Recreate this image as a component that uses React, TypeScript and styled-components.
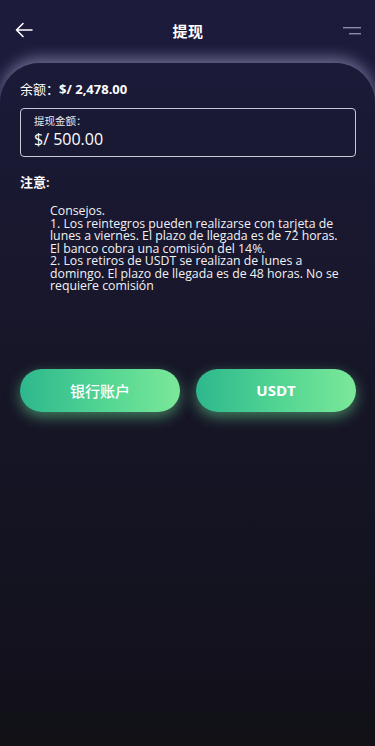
import React from "react";
import styled, { createGlobalStyle } from "styled-components";

const GlobalStyle = createGlobalStyle`
  html, body {
    margin: 0;
    padding: 0;
    background: #111116;
  }
  body {
    font-family: "Open Sans", "Noto Sans CJK SC", sans-serif;
    color: #ffffff;
  }
`;

const Page = styled.div`
  width: 375px;
  min-height: 746px;
  display: flex;
  flex-direction: column;
  background: #1c1b3b;
  overflow: hidden;
`;

const Header = styled.div`
  height: 63px;
  display: flex;
  align-items: center;
  justify-content: space-between;
  padding: 0 11px 3px 12px;
  box-sizing: border-box;
`;

const Title = styled.div`
  font-size: 15px;
  font-weight: 700;
  letter-spacing: 0.5px;
`;

const IconBtn = styled.div`
  width: 24px;
  height: 24px;
  display: flex;
  align-items: center;
  justify-content: center;
`;

const Card = styled.div`
  flex: 1;
  display: flex;
  flex-direction: column;
  border-radius: 40px 40px 0 0;
  background: linear-gradient(180deg, #1b1a38 0%, #171628 45%, #12111c 90%, #111116 100%);
  box-shadow: 0 -6px 14px rgba(190, 190, 235, 0.45);
  padding: 15px 19px 0 20px;
`;

const Balance = styled.div`
  font-size: 13px;
  line-height: 18px;
  margin-top: 2px;
`;

const Strong = styled.span`
  font-weight: 700;
`;

const AmountBox = styled.div`
  margin-top: 10px;
  border: 1px solid #c9c9d6;
  border-radius: 4px;
  padding: 5px 13px 6px;
  display: flex;
  flex-direction: column;
`;

const AmountLabel = styled.div`
  font-size: 10.5px;
  line-height: 14px;
  color: #e8e8ef;
`;

const AmountValue = styled.div`
  font-size: 16px;
  line-height: 22px;
`;

const NoteTitle = styled.div`
  margin-top: 16px;
  font-size: 13px;
  font-weight: 600;
  line-height: 18px;
`;

const NoteText = styled.div`
  margin: 14px 0 0 30px;
  font-size: 12.3px;
  line-height: 12.5px;
  color: #f2f2f5;
`;

const Buttons = styled.div`
  margin-top: 76px;
  display: grid;
  grid-template-columns: 1fr 1fr;
  gap: 16px;
`;

const GreenButton = styled.button<{ $cjk?: boolean }>`
  height: 43px;
  border: none;
  border-radius: 22px;
  background: linear-gradient(90deg, #2db88d 0%, #55d693 55%, #7be899 100%);
  box-shadow: 0 5px 14px rgba(110, 230, 150, 0.5);
  color: #ffffff;
  font-family: "Open Sans", "Noto Sans CJK SC", sans-serif;
  font-size: 15px;
  font-weight: ${(p) => (p.$cjk ? 500 : 700)};
  padding: 0;
`;

const lines = [
  "Consejos.",
  "1. Los reintegros pueden realizarse con tarjeta de",
  "lunes a viernes. El plazo de llegada es de 72 horas.",
  "El banco cobra una comisión del 14%.",
  "2. Los retiros de USDT se realizan de lunes a",
  "domingo. El plazo de llegada es de 48 horas. No se",
  "requiere comisión",
];

export default function App() {
  return (
    <>
      <GlobalStyle />
      <Page>
        <Header>
          <IconBtn>
            <svg width="20" height="20" viewBox="0 0 20 20" fill="none" stroke="#fff" strokeWidth="1.6" strokeLinecap="round" strokeLinejoin="round">
              <path d="M18 10H3M9 3.5L2.5 10L9 16.5" />
            </svg>
          </IconBtn>
          <Title>提现</Title>
          <IconBtn>
            <svg width="20" height="20" viewBox="0 0 20 20">
              <rect x="1" y="7" width="18" height="1.4" fill="#8c8ca8" />
              <rect x="7" y="13" width="12" height="1.4" fill="#8c8ca8" />
            </svg>
          </IconBtn>
        </Header>
        <Card>
          <Balance>
            余额：<Strong>$/ 2,478.00</Strong>
          </Balance>
          <AmountBox>
            <AmountLabel>提现金额：</AmountLabel>
            <AmountValue>$/ 500.00</AmountValue>
          </AmountBox>
          <NoteTitle>注意:</NoteTitle>
          <NoteText>
            {lines.map((l) => (
              <div key={l}>{l}</div>
            ))}
          </NoteText>
          <Buttons>
            <GreenButton $cjk>银行账户</GreenButton>
            <GreenButton>USDT</GreenButton>
          </Buttons>
        </Card>
      </Page>
    </>
  );
}
